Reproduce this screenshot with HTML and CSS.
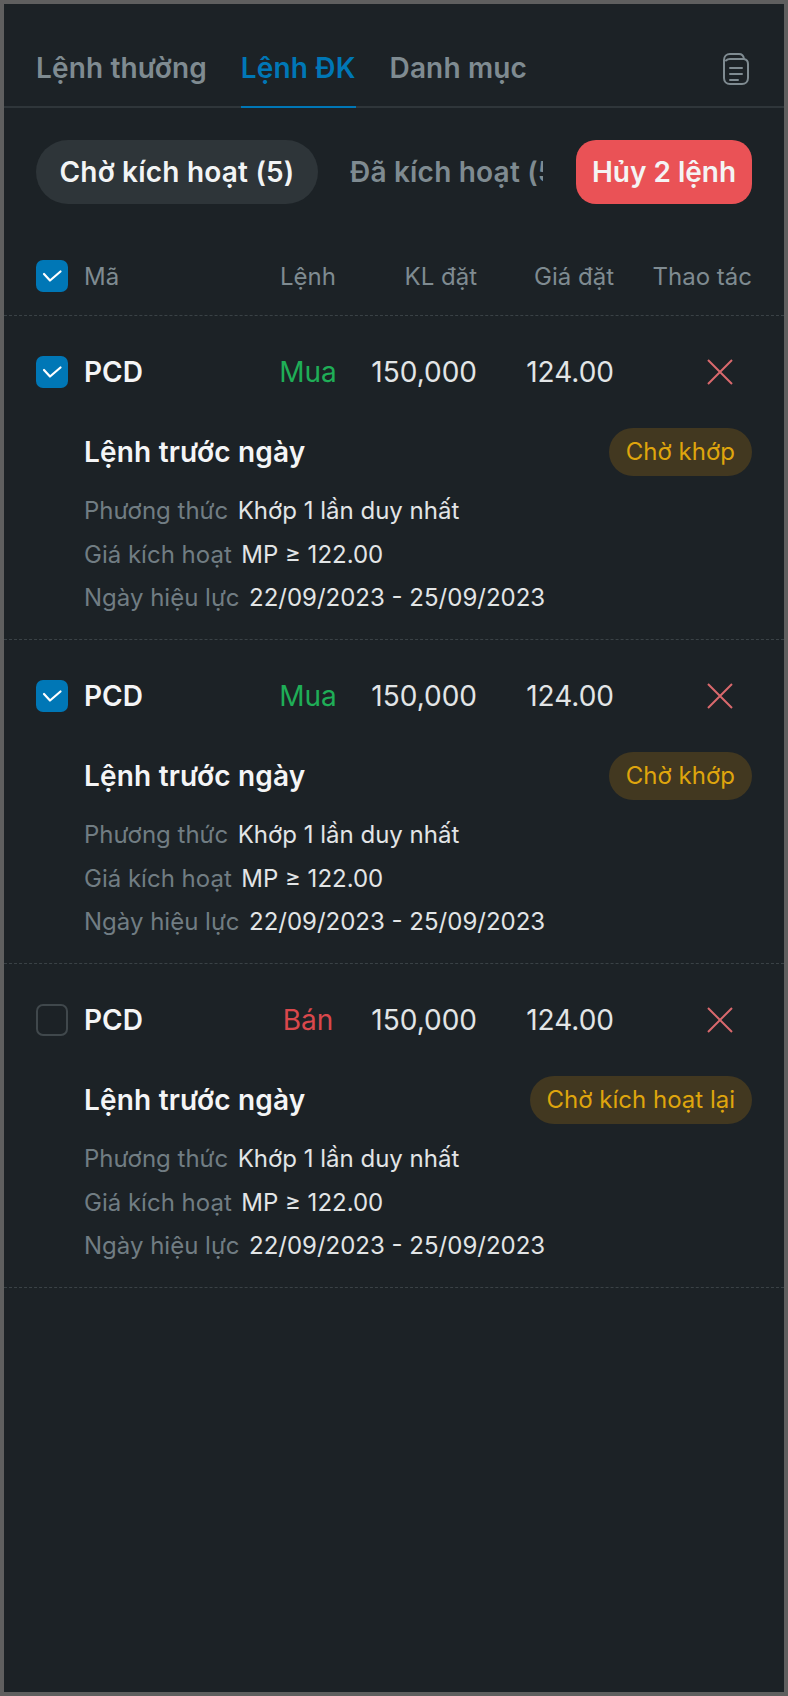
FILE: index.html
```html
<!DOCTYPE html>
<html lang="vi">
<head>
<meta charset="utf-8">
<title>Lệnh ĐK</title>
<link rel="stylesheet" href="styles.css">
</head>
<body>
<div class="app">
  <nav class="tabs">
    <a class="tab">Lệnh thường</a>
    <a class="tab active">Lệnh ĐK</a>
    <a class="tab">Danh mục</a>
    <svg class="doc" viewBox="0 0 26 32" width="26" height="32" fill="none" stroke="#7f8b91" stroke-width="2" stroke-linecap="round" stroke-linejoin="round">
      <path d="M1 7C1 3.5 3.5 1 7 1H16C19 1 20.5 2.5 21 6C23.5 6.5 25 8.5 25 11V25C25 28.5 22.5 31 19 31H7C3.5 31 1 28.5 1 25Z"/>
      <path d="M3 7.5C4 6.5 5.5 6 7 6H21"/>
      <path d="M7 15H19M7 21H19M7 27H15"/>
    </svg>
  </nav>
  <div class="filters">
    <span class="pill">Chờ kích hoạt (5)</span>
    <span class="pill-off">Đã kích hoạt (5)</span>
    <button class="cancel">Hủy 2 lệnh</button>
  </div>
  <div class="grid head">
    <span class="check on"><svg viewBox="0 0 32 32"><path d="M8 14L14 20.5L24.5 11.5"/></svg></span>
    <span class="sym">Mã</span>
    <span class="c">Lệnh</span>
    <span class="r">KL đặt</span>
    <span class="r">Giá đặt</span>
    <span class="r">Thao tác</span>
  </div>

  <section class="order">
    <div class="grid main">
      <span class="check on"><svg viewBox="0 0 32 32"><path d="M8 14L14 20.5L24.5 11.5"/></svg></span>
      <span class="sym">PCD</span>
      <span class="c buy">Mua</span>
      <span class="r">150,000</span>
      <span class="r">124.00</span>
      <span class="r"><svg class="x" viewBox="0 0 28 28"><path d="M2 2L26 26M26 2L2 26"/></svg></span>
    </div>
    <div class="info">
      <div class="title-row"><strong>Lệnh trước ngày</strong><span class="badge">Chờ khớp</span></div>
      <div class="line"><span>Phương thức</span><b>Khớp 1 lần duy nhất</b></div>
      <div class="line"><span>Giá kích hoạt</span><b>MP ≥ 122.00</b></div>
      <div class="line"><span>Ngày hiệu lực</span><b>22/09/2023 - 25/09/2023</b></div>
    </div>
  </section>

  <section class="order">
    <div class="grid main">
      <span class="check on"><svg viewBox="0 0 32 32"><path d="M8 14L14 20.5L24.5 11.5"/></svg></span>
      <span class="sym">PCD</span>
      <span class="c buy">Mua</span>
      <span class="r">150,000</span>
      <span class="r">124.00</span>
      <span class="r"><svg class="x" viewBox="0 0 28 28"><path d="M2 2L26 26M26 2L2 26"/></svg></span>
    </div>
    <div class="info">
      <div class="title-row"><strong>Lệnh trước ngày</strong><span class="badge">Chờ khớp</span></div>
      <div class="line"><span>Phương thức</span><b>Khớp 1 lần duy nhất</b></div>
      <div class="line"><span>Giá kích hoạt</span><b>MP ≥ 122.00</b></div>
      <div class="line"><span>Ngày hiệu lực</span><b>22/09/2023 - 25/09/2023</b></div>
    </div>
  </section>

  <section class="order">
    <div class="grid main">
      <span class="check"></span>
      <span class="sym">PCD</span>
      <span class="c sell">Bán</span>
      <span class="r">150,000</span>
      <span class="r">124.00</span>
      <span class="r"><svg class="x" viewBox="0 0 28 28"><path d="M2 2L26 26M26 2L2 26"/></svg></span>
    </div>
    <div class="info">
      <div class="title-row"><strong>Lệnh trước ngày</strong><span class="badge">Chờ kích hoạt lại</span></div>
      <div class="line"><span>Phương thức</span><b>Khớp 1 lần duy nhất</b></div>
      <div class="line"><span>Giá kích hoạt</span><b>MP ≥ 122.00</b></div>
      <div class="line"><span>Ngày hiệu lực</span><b>22/09/2023 - 25/09/2023</b></div>
    </div>
  </section>
</div>
</body>
</html>
```
FILE: styles.css
```css
* { box-sizing: border-box; }
html, body { margin: 0; padding: 0; height: 100%; }
body { background: #1c2226; font-family: Inter, "Noto Sans", sans-serif; color: #eef1f2; }
.app { height: 1696px; border: 4px solid #5f5f5f; background: #1c2226; overflow: hidden; }

.tabs { display: flex; align-items: flex-end; height: 104px; padding: 0 32px; gap: 34px; border-bottom: 2px solid #2f363a; }
.tab { font-size: 28px; line-height: 40px; font-weight: 600; letter-spacing: 0.15px; color: #7f8b91; padding: 0 0 18px; margin-bottom: -2px; border-bottom: 2px solid transparent; white-space: nowrap; }
.tab.active { color: #0077b6; border-bottom-color: #0077b6; }
.doc { margin: 0 3px 21px auto; }

.filters { display: flex; align-items: center; padding: 32px 32px 0; height: 96px; }
.pill { height: 64px; width: 282px; display: flex; align-items: center; justify-content: center; border-radius: 32px; background: #2e3539; font-size: 28px; font-weight: 600; letter-spacing: 0.2px; color: #f2f4f5; white-space: nowrap; }
.pill-off { width: 193px; margin-left: 32px; overflow: hidden; font-size: 28px; font-weight: 600; letter-spacing: 0.2px; color: #7f8b91; white-space: nowrap; }
.cancel { margin-left: auto; width: 176px; height: 64px; border: 0; border-radius: 20px; background: #ea5256; color: #f4f4f4; font: 600 28px Inter, sans-serif; padding: 0; white-space: nowrap; }

.grid { display: grid; grid-template-columns: 32px 1fr 80px 129px 137px 138px; align-items: center; padding: 0 32px; }
.head { height: 112px; padding-top: 33px; border-bottom: 1px dashed #3a4246; font-size: 24px; color: #7f8b91; }
.sym { margin-left: 16px; }
.c { text-align: center; }
.r { text-align: right; }
.check { width: 32px; height: 32px; border-radius: 7px; border: 2px solid #40484c; display: block; }
.check.on { background: #0077b6; border: 0; }
.check svg { display: block; width: 32px; height: 32px; fill: none; stroke: #fff; stroke-width: 2.2; stroke-linecap: round; stroke-linejoin: round; }

.order { height: 324px; border-bottom: 1px dashed #3a4246; }
.main { height: 112px; font-size: 28px; color: #e2e5e6; }
.main .sym { font-weight: 600; color: #f4f5f6; }
.buy { color: #1fae57; }
.sell { color: #d9484c; }
.x { display: block; width: 28px; height: 28px; margin: 0 18px 0 auto; fill: none; stroke: #d9696d; stroke-width: 2; }

.info { padding: 0 32px 0 80px; }
.title-row { display: flex; align-items: center; justify-content: space-between; height: 48px; margin-bottom: 13px; }
.title-row strong { font-size: 28px; font-weight: 600; letter-spacing: 0.2px; color: #f4f5f6; }
.badge { height: 48px; padding: 0 17px 2px; display: flex; align-items: center; border-radius: 24px; background: #423820; color: #dfa50d; font-size: 24px; }
.line { display: flex; gap: 9.5px; height: 43.5px; align-items: center; font-size: 24px; white-space: nowrap; }
.line span { color: #717d83; }
.line b { font-weight: 400; color: #e2e5e6; }
```
